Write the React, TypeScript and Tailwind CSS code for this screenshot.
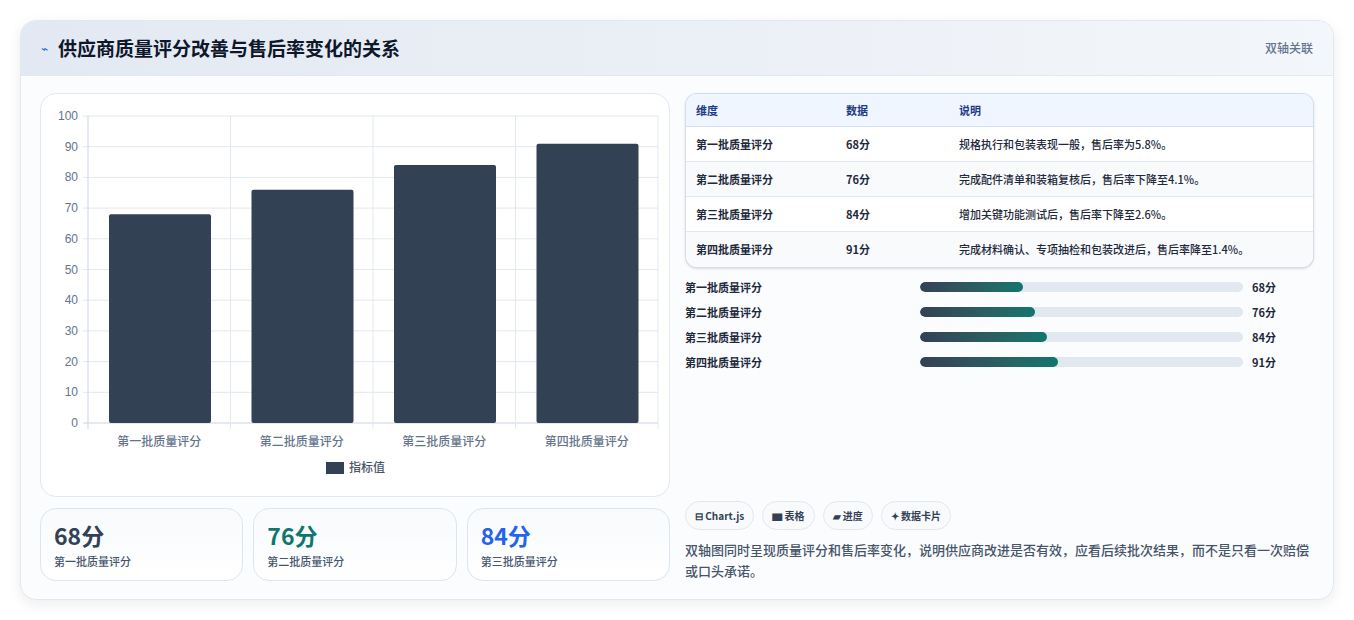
import React from "react";

const F = { fontFamily: '"Noto Sans CJK SC", "Noto Sans", sans-serif' };
const cats = ["第一批质量评分", "第二批质量评分", "第三批质量评分", "第四批质量评分"];
const vals = [68, 76, 84, 91];
const rows = [
  ["第一批质量评分", "68分", "规格执行和包装表现一般，售后率为5.8%。"],
  ["第二批质量评分", "76分", "完成配件清单和装箱复核后，售后率下降至4.1%。"],
  ["第三批质量评分", "84分", "增加关键功能测试后，售后率下降至2.6%。"],
  ["第四批质量评分", "91分", "完成材料确认、专项抽检和包装改进后，售后率降至1.4%。"],
];
const fills = [103, 115, 127, 138];

function Chart() {
  const L = 47, R = 617, T = 22, B = 329;
  const h = B - T;
  const cw = (R - L) / 4;
  return (
    <svg width="629" height="403" className="block">
      {Array.from({ length: 11 }, (_, i) => {
        const y = B - (h * i) / 10;
        return (
          <g key={i}>
            <line x1={L - 5} x2={R} y1={y} y2={y} stroke={i === 0 ? "#cbd5e1" : "#e2e8f0"} />
            <text x={L - 10} y={y + 4} textAnchor="end" fontSize="12" fill="#64748b" fontFamily="Liberation Sans, sans-serif">{i * 10}</text>
          </g>
        );
      })}
      {[0, 1, 2, 3, 4].map((i) => (
        <line key={i} x1={L + cw * i} x2={L + cw * i} y1={T} y2={B + 6} stroke={i === 0 ? "#cbd5e1" : "#e2e8f0"} />
      ))}
      {vals.map((v, i) => (
        <rect key={i} x={L + cw * i + 21} width={102} y={B - (h * v) / 100} height={(h * v) / 100} rx="2" fill="#334155" />
      ))}
      {cats.map((c, i) => (
        <text key={c} x={L + cw * i + cw / 2} y={352} textAnchor="middle" fontSize="12" fontWeight="500" fill="#64748b" style={F}>{c}</text>
      ))}
      <rect x="285" y="368" width="18" height="12" fill="#334155" />
      <text x="308" y="378" fontSize="12" fontWeight="500" fill="#475569" style={F}>指标值</text>
    </svg>
  );
}

export default function App() {
  return (
    <div className="bg-white p-5 w-[1354px] h-[620px]" style={F}>
      <div className="rounded-2xl border border-slate-200 bg-[#fbfcfe] shadow-[0_4px_14px_rgba(15,23,42,0.08)] overflow-hidden h-[580px] flex flex-col">
        <div className="h-[55px] shrink-0 flex items-center justify-between px-5 bg-gradient-to-r from-[#e3e9f2] to-[#f3f6fa] border-b border-slate-200">
          <div className="flex items-center gap-[10px]">
            <span className="text-[#2563eb] text-[12px]">⌁</span>
            <span className="text-[19px] font-bold text-[#0f172a]">供应商质量评分改善与售后率变化的关系</span>
          </div>
          <span className="text-[12px] font-medium text-slate-500">双轴关联</span>
        </div>
        <div className="flex-1 flex gap-[15px] px-[19px] pt-[17px] pb-[18px]">
          <div className="w-[630px] flex flex-col gap-[11px]">
            <div className="h-[404px] rounded-2xl border border-slate-200 bg-white">
              <Chart />
            </div>
            <div className="grid grid-cols-3 gap-[10px]">
              {[["68分", "text-[#334155]"], ["76分", "text-[#0f766e]"], ["84分", "text-[#2563eb]"]].map(([v, c], i) => (
                <div key={v} className="h-[73px] rounded-2xl border border-[#dbe5f1] bg-gradient-to-b from-[#f8fafc] to-white px-[13px] pt-[9px]">
                  <div className={`text-[23px] font-bold leading-[34px] ${c}`}>{v}</div>
                  <div className="text-[11px] font-medium text-slate-600 leading-[18px]">{cats[i]}</div>
                </div>
              ))}
            </div>
          </div>
          <div className="w-[630px] flex flex-col">
            <div className="rounded-xl border border-slate-300/80 overflow-hidden bg-white shadow-sm">
              <div className="flex h-[33px] items-center bg-[#eff6ff] border-b border-slate-300/70 text-[11px] font-bold text-[#1e3a8a]">
                <div className="w-[160px] pl-[10px]">维度</div>
                <div className="w-[113px]">数据</div>
                <div>说明</div>
              </div>
              {rows.map((r, i) => (
                <div key={i} className={`flex h-[35px] items-center text-[11px] text-[#1e293b] font-medium ${i < 3 ? "border-b border-slate-200" : ""} ${i % 2 ? "bg-[#f8fafc]" : "bg-white"}`}>
                  <div className="w-[160px] pl-[10px] font-bold">{r[0]}</div>
                  <div className="w-[113px] font-bold">{r[1]}</div>
                  <div>{r[2]}</div>
                </div>
              ))}
            </div>
            <div className="flex flex-col gap-[11px] mt-[12px]">
              {rows.map((r, i) => (
                <div key={i} className="flex items-center h-[14px] text-[11px] font-bold text-[#1e293b]">
                  <div className="w-[235px]">{r[0]}</div>
                  <div className="w-[323px] h-[10px] rounded-full bg-[#e2e8f0] overflow-hidden">
                    <div className="h-full rounded-full bg-gradient-to-r from-[#334155] to-[#0f766e]" style={{ width: fills[i] }} />
                  </div>
                  <div className="ml-[9px] font-bold">{r[1]}</div>
                </div>
              ))}
            </div>
            <div className="flex-1" />
            <div className="flex gap-[8px] mb-[9px]">
              {["⊟ Chart.js", "▆ 表格", "▰ 进度", "✦ 数据卡片"].map((t) => (
                <span key={t} className="h-[29px] px-[9px] flex items-center rounded-full border border-slate-200 bg-[#f8fafc] text-[10px] font-bold text-[#334155]">{t}</span>
              ))}
            </div>
            <p className="text-[13px] leading-[21px] text-[#475569] font-medium w-[628px]">双轴图同时呈现质量评分和售后率变化，说明供应商改进是否有效，应看后续批次结果，而不是只看一次赔偿或口头承诺。</p>
          </div>
        </div>
      </div>
    </div>
  );
}
